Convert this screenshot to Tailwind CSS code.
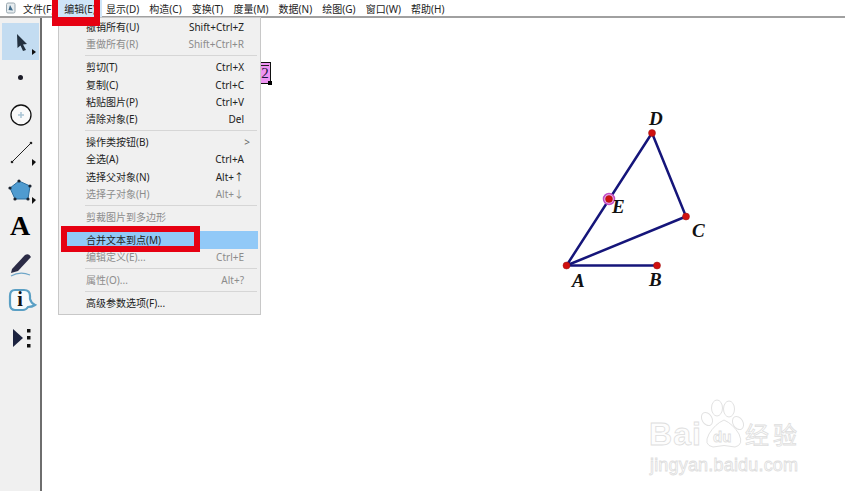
<!DOCTYPE html>
<html lang="zh-CN">
<head>
    <meta charset="UTF-8">
    <title>几何画板</title>
    <script src="https://cdn.jsdelivr.net/npm/@tailwindcss/browser@4"></script>
</head>
<body class="relative w-[845px] h-[491px] overflow-hidden bg-white text-[10px] text-[#222] font-['Noto_Sans','Noto_Sans_CJK_SC',sans-serif]">

    <!-- Menu bar -->
    <header class="h-[18px] flex items-center bg-white border-b-2 border-[#a0a0a0]">
        <svg class="ml-[5px] w-[12px] h-[12px]" viewBox="0 0 12 12">
            <rect x="1.500" y="1" width="8.500" height="10" rx="1.500" fill="#e6ecef" stroke="#9aa8b0"/>
            <path d="M5 3 L8 8.500 L3.500 8 Z" fill="#3f6a8a"/>
        </svg>
        <nav class="ml-[6px] flex gap-[10.100px] leading-none pt-[1px]">
            <span>文件(F)</span>
            <span class="bg-[#cfe5f8] -mx-[6px] px-[6px] py-[5px] -my-[5px]">编辑(E)</span>
            <span>显示(D)</span>
            <span>构造(C)</span>
            <span>变换(T)</span>
            <span>度量(M)</span>
            <span>数据(N)</span>
            <span>绘图(G)</span>
            <span>窗口(W)</span>
            <span>帮助(H)</span>
        </nav>
    </header>

    <div class="flex h-[473px]">
        <!-- Toolbar -->
        <aside class="w-[42px] shrink-0 bg-[#f0f0f0] border-r-2 border-[#6e6e6e] flex flex-col items-center pt-[5px]">
            <div class="w-[37px] h-[37px] bg-[#c3dcf1] flex items-center justify-center">
                <svg class="w-[37px] h-[37px]" viewBox="0 0 37 37">
                    <path d="M15 11 L25 21 L21 21.500 L24 27 L21 28 L18.500 22.500 L15.500 25 Z" fill="#22303f"/>
                    <path d="M30 26 L34 29 L30 32 Z" fill="#111"/>
                </svg>
            </div>
            <div class="w-[37px] h-[34px] mb-[2px] flex items-center justify-center">
                <span class="w-[5px] h-[5px] rounded-full bg-[#1c1c28]"></span>
            </div>
            <svg class="w-[37px] h-[38px]" viewBox="0 0 37 38">
                <circle cx="19" cy="19" r="10" fill="#fafafa" stroke="#111" stroke-width="1.300"/>
                <path d="M19 16 V22 M16 19 H22" stroke="#a9c4d4" stroke-width="1.500"/>
            </svg>
            <svg class="w-[37px] h-[38px]" viewBox="0 0 37 38">
                <path d="M10 28 L29 9" stroke="#222" stroke-width="1"/>
                <circle cx="10" cy="28" r="1.300" fill="#222"/>
                <circle cx="29" cy="9" r="1.300" fill="#222"/>
                <path d="M30 25 L34 28 L30 32 Z" fill="#111"/>
            </svg>
            <svg class="w-[37px] h-[38px]" viewBox="0 0 37 38">
                <path d="M8 16 L17 9 L28 14 L26 27 L13 27 Z" fill="#4f9bd0" stroke="#2d6f9f"/>
                <g fill="#1c2430">
                    <circle cx="8" cy="16" r="1.600"/>
                    <circle cx="17" cy="9" r="1.600"/>
                    <circle cx="28" cy="14" r="1.600"/>
                    <circle cx="26" cy="27" r="1.600"/>
                    <circle cx="13" cy="27" r="1.600"/>
                </g>
                <path d="M30 25 L34 28 L30 32 Z" fill="#111"/>
            </svg>
            <div class="w-[37px] h-[34px] pb-[2px] flex items-center justify-center text-[28px] font-bold text-black leading-none font-['Liberation_Serif',serif]">A</div>
            <svg class="w-[37px] h-[38px]" viewBox="0 0 37 38">
                <path d="M10 25 L23 11 Q27 9 29 13 L16 27 L9 29 Z" fill="#2b2b45"/>
                <path d="M9 32 Q18 27 28 31" fill="none" stroke="#6fa6c8" stroke-width="1.200"/>
            </svg>
            <svg class="w-[37px] h-[38px]" viewBox="0 0 37 38">
                <path d="M13 8 H22 Q28 8 28 14 V17 Q29 21 33 23 Q30 25 26 25 Q24 28 21 28 H13 Q8 28 8 22 V14 Q8 8 13 8 Z" fill="#f6fafc" stroke="#5a9fc4" stroke-width="2.200"/>
                <text x="18" y="24" text-anchor="middle" font-size="20" font-weight="700" fill="#111" font-family="Liberation Serif, serif">i</text>
            </svg>
            <svg class="w-[37px] h-[38px]" viewBox="0 0 37 38">
                <path d="M11 9 L21 18 L11 27 Z" fill="#1c2340"/>
                <rect x="25" y="9" width="3.500" height="3.500" fill="#111"/>
                <rect x="25" y="16" width="3.500" height="3.500" fill="#111"/>
                <rect x="25" y="24" width="3.500" height="3.500" fill="#111"/>
            </svg>
        </aside>

        <!-- Sketch canvas -->
        <main class="relative flex-1 bg-white">
            <svg class="absolute left-0 top-0 w-[803px] h-[473px]" viewBox="42 18 803 473">
                <g fill="none" stroke="#15157a" stroke-width="2.500">
                    <path d="M566.500 265.500 L652 133 L686 216.500 L566.500 265.500"/>
                    <path d="M566.500 265.500 H657"/>
                </g>
                <circle cx="609" cy="199" r="5.500" fill="#f2b4ef" stroke="#c04fc4" stroke-width="1.500"/>
                <g fill="#d01010" stroke="#981515" stroke-width="0.500">
                    <circle cx="566.500" cy="265.500" r="3.500"/>
                    <circle cx="657" cy="265.500" r="3.500"/>
                    <circle cx="686" cy="216.500" r="3.500"/>
                    <circle cx="652" cy="133" r="3.500"/>
                    <circle cx="609" cy="199" r="3.500"/>
                </g>
                <g font-family="Liberation Serif, serif" font-size="19" font-weight="700" font-style="italic" fill="#111">
                    <text x="572" y="287">A</text>
                    <text x="649" y="286">B</text>
                    <text x="692" y="237">C</text>
                    <text x="649" y="125">D</text>
                    <text x="612" y="213">E</text>
                </g>

                <!-- Baidu watermark -->
                <g fill="none" stroke="#e2e2e2" stroke-width="1">
                    <ellipse cx="717" cy="408" rx="5.500" ry="8"/>
                    <ellipse cx="729" cy="409" rx="5.500" ry="8"/>
                    <ellipse cx="707" cy="419" rx="5" ry="7" transform="rotate(-30 707 419)"/>
                    <ellipse cx="738" cy="423" rx="5" ry="7" transform="rotate(-30 738 423)"/>
                    <path d="M724 420 Q733 424 739 434 Q744 445 735 447 Q724 444 713 447 Q703 445 709 434 Q715 424 724 420 Z"/>
                </g>
                <g font-family="Liberation Sans, sans-serif" fill="#fdfdfd" stroke="#dedede" stroke-width="0.800">
                    <text x="649" y="445" font-size="32" font-weight="700" textLength="52">Bai</text>
                    <text x="713" y="442" font-size="15" font-weight="700">du</text>
                    <text x="745" y="444" font-size="24" font-family="Noto Sans CJK SC, sans-serif" textLength="52">经验</text>
                    <text x="650" y="471" font-size="18" textLength="148">jingyan.baidu.com</text>
                </g>
            </svg>

            <!-- Caption on the canvas, partly under the menu -->
            <div class="absolute left-[212px] top-[44px] w-[17px] h-[22px] bg-[#ee94f2] border border-[#111] flex items-center justify-center text-[15px] leading-none font-['Liberation_Serif',serif] text-[#1a1a40]">
                <span class="ml-[5px] border-t border-[#222]">2</span>
                <span class="absolute -right-[2px] -bottom-[2px] w-[4px] h-[4px] bg-black"></span>
            </div>
        </main>
    </div>

    <!-- Edit menu -->
    <div class="absolute left-[58px] top-[17px] w-[203px] h-[298px] bg-[#f0f0f0] border border-[#c8c8c8] px-[2px] pt-[0.500px]">
        <ul class="leading-none">
            <li class="h-[17.250px] pl-[25px] pr-[14px] flex items-center justify-between"><span>撤销所有(U)</span><span>Shift+Ctrl+Z</span></li>
            <li class="h-[17.250px] pl-[25px] pr-[14px] flex items-center justify-between text-[#8c8c8c]"><span>重做所有(R)</span><span>Shift+Ctrl+R</span></li>
            <li class="h-[5.750px] ml-[24px] mr-[1px] flex items-center"><span class="block w-full h-px bg-[#d6d6d6]"></span></li>
            <li class="h-[17.250px] pl-[25px] pr-[14px] flex items-center justify-between"><span>剪切(T)</span><span>Ctrl+X</span></li>
            <li class="h-[17.250px] pl-[25px] pr-[14px] flex items-center justify-between"><span>复制(C)</span><span>Ctrl+C</span></li>
            <li class="h-[17.250px] pl-[25px] pr-[14px] flex items-center justify-between"><span>粘贴图片(P)</span><span>Ctrl+V</span></li>
            <li class="h-[17.250px] pl-[25px] pr-[14px] flex items-center justify-between"><span>清除对象(E)</span><span>Del</span></li>
            <li class="h-[5.750px] ml-[24px] mr-[1px] flex items-center"><span class="block w-full h-px bg-[#d6d6d6]"></span></li>
            <li class="h-[17.250px] pl-[25px] pr-[8px] flex items-center justify-between"><span>操作类按钮(B)</span><span class="text-[#666]">&gt;</span></li>
            <li class="h-[17.250px] pl-[25px] pr-[14px] flex items-center justify-between"><span>全选(A)</span><span>Ctrl+A</span></li>
            <li class="h-[17.250px] pl-[25px] pr-[14px] flex items-center justify-between"><span>选择父对象(N)</span><span>Alt+↑</span></li>
            <li class="h-[17.250px] pl-[25px] pr-[14px] flex items-center justify-between text-[#8c8c8c]"><span>选择子对象(H)</span><span>Alt+↓</span></li>
            <li class="h-[5.750px] ml-[24px] mr-[1px] flex items-center"><span class="block w-full h-px bg-[#d6d6d6]"></span></li>
            <li class="h-[17.250px] pl-[25px] pr-[14px] flex items-center justify-between text-[#8c8c8c]"><span>剪裁图片到多边形</span></li>
            <li class="h-[5.750px] ml-[24px] mr-[1px]"></li>
            <li class="h-[17.250px] pl-[25px] pr-[14px] flex items-center justify-between bg-[#91c9f7]"><span>合并文本到点(M)</span></li>
            <li class="h-[17.250px] pl-[25px] pr-[14px] flex items-center justify-between text-[#8c8c8c]"><span>编辑定义(E)...</span><span>Ctrl+E</span></li>
            <li class="h-[5.750px] ml-[24px] mr-[1px] flex items-center"><span class="block w-full h-px bg-[#d6d6d6]"></span></li>
            <li class="h-[17.250px] pl-[25px] pr-[14px] flex items-center justify-between text-[#8c8c8c]"><span>属性(O)...</span><span>Alt+?</span></li>
            <li class="h-[5.750px] ml-[24px] mr-[1px] flex items-center"><span class="block w-full h-px bg-[#d6d6d6]"></span></li>
            <li class="h-[17.250px] pl-[25px] pr-[14px] flex items-center justify-between"><span>高级参数选项(F)...</span></li>
        </ul>
    </div>

    <!-- Red annotations drawn on the screenshot -->
    <div class="absolute left-[52px] top-0 w-[48px] h-[26px] border-x-[6px] border-b-[9px] border-[#e60012]"></div>
    <div class="absolute left-[61px] top-[226px] w-[139px] h-[26px] border-[6px] border-[#e60012]"></div>
</body>
</html>
